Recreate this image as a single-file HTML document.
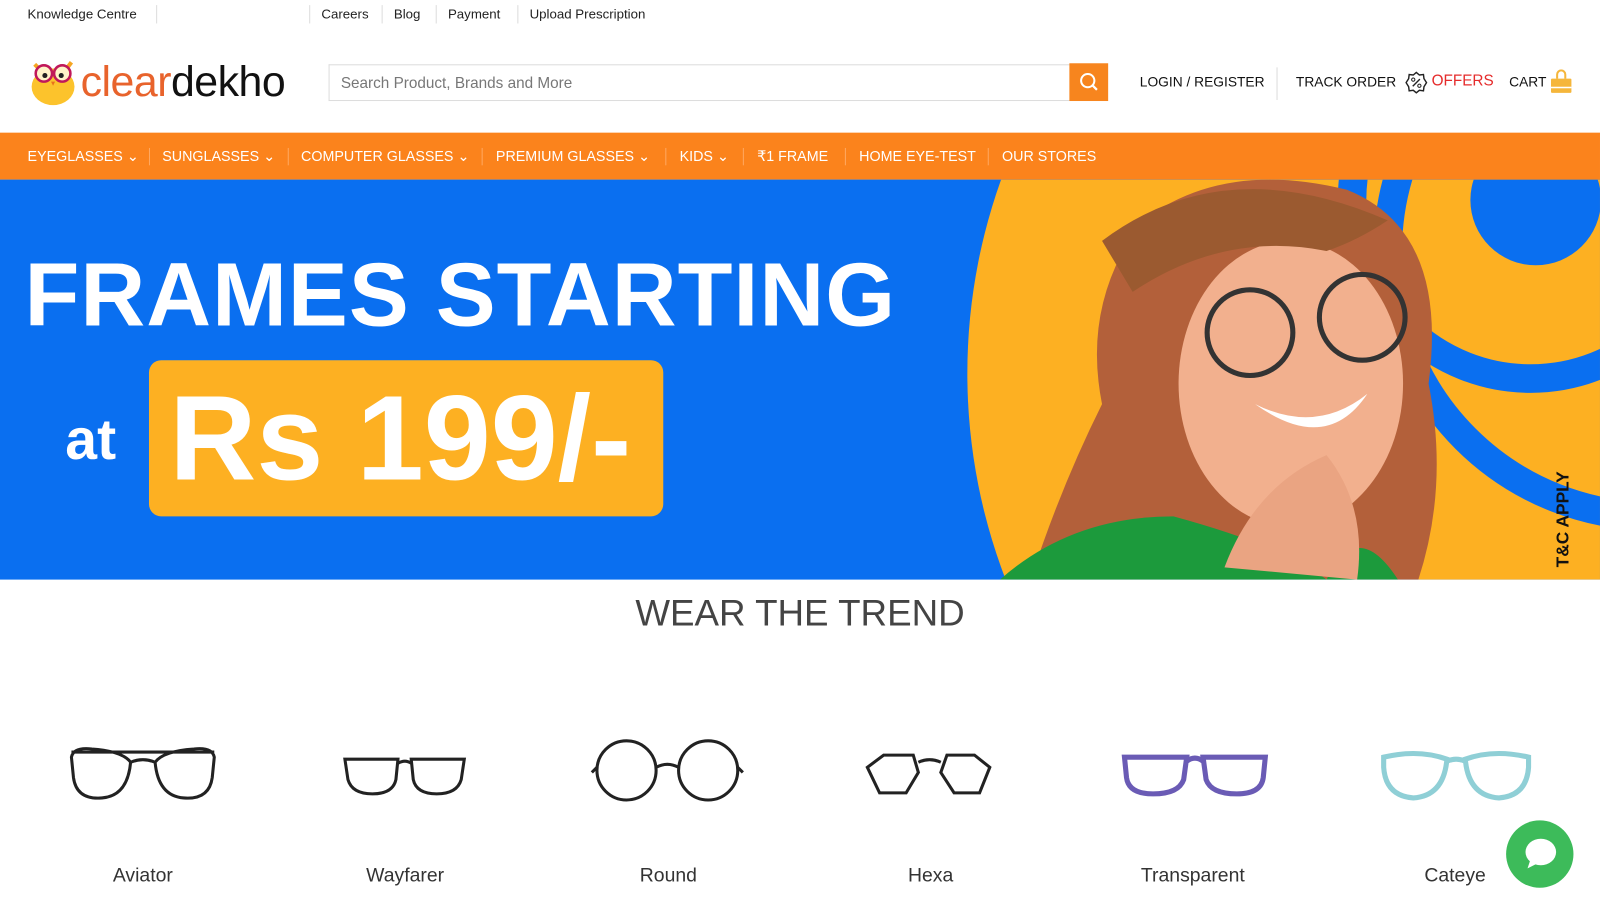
<!DOCTYPE html>
<html><head><meta charset="utf-8"><style>
*{margin:0;padding:0;box-sizing:border-box}
body{width:1600px;height:909px;overflow:hidden;background:#fff;font-family:"Liberation Sans",sans-serif;position:relative;color:#222}
#wrap{position:absolute;left:0;top:0;width:1568px;height:891px;transform:scale(1.0204);transform-origin:0 0}
.top{position:absolute;top:0;left:0;height:28px;font-size:13px;color:#222}
.top span{position:absolute;top:6px;white-space:nowrap}
.sep{position:absolute;width:1px;background:#ddd}
.nav{position:absolute;top:130px;left:0;width:1568px;height:46px;background:#fb831c}
.nav span{position:absolute;top:15px;color:#fff;font-size:14px;white-space:nowrap}
.nav i{position:absolute;top:15px;width:1px;height:17px;background:#ffa860}
.banner{position:absolute;top:176px;left:0;width:1568px;height:392px;background:#0a6ff0;overflow:hidden}
.lbl{position:absolute;top:848px;font-size:19px;color:#333;text-align:center;width:200px}
</style></head><body><div id="wrap">
<div class="top">
<span style="left:27px">Knowledge Centre</span>
<span style="left:315px">Careers</span><span style="left:386px">Blog</span><span style="left:439px">Payment</span><span style="left:519px">Upload Prescription</span>
</div>
<div class="sep" style="left:153px;top:5px;height:18px"></div>
<div class="sep" style="left:303px;top:5px;height:18px"></div>
<div class="sep" style="left:374px;top:5px;height:18px"></div>
<div class="sep" style="left:427px;top:5px;height:18px"></div>
<div class="sep" style="left:507px;top:5px;height:18px"></div>

<svg style="position:absolute;left:28px;top:55px" width="52" height="50" viewBox="0 0 52 50">
<ellipse cx="24" cy="30" rx="21" ry="18" fill="#fcc32c"/>
<path d="M6 8 L12 14 M42 6 L36 14" stroke="#f5a623" stroke-width="4"/>
<circle cx="15" cy="17" r="8" fill="#fff3c8" stroke="#c0185a" stroke-width="2.5"/>
<circle cx="33" cy="17" r="8" fill="#fff3c8" stroke="#c0185a" stroke-width="2.5"/>
<circle cx="16" cy="19" r="2.5" fill="#222"/><circle cx="32" cy="19" r="2.5" fill="#222"/>
<path d="M22 25 L24 29 L26 25Z" fill="#e8731c"/>
</svg>
<div style="position:absolute;left:79px;top:56px;font-size:42px;letter-spacing:-0.5px"><span style="color:#e8632c">clear</span><span style="color:#111">dekho</span></div>

<div style="position:absolute;left:322px;top:63px;width:728px;height:36px;border:1px solid #ddd;border-right:none;font-size:15px;color:#777;padding:9px 11px">Search Product, Brands and More</div>
<div style="position:absolute;left:1048px;top:62px;width:38px;height:37px;background:#f7851e">
<svg width="38" height="37"><circle cx="18" cy="17" r="6.5" fill="none" stroke="#fff" stroke-width="2"/><path d="M23 22 L27 26" stroke="#fff" stroke-width="2.2"/></svg></div>

<div style="position:absolute;left:1117px;top:73px;font-size:13.5px;color:#111">LOGIN / REGISTER</div>
<div class="sep" style="left:1251px;top:66px;height:32px"></div>
<div style="position:absolute;left:1270px;top:73px;font-size:13.5px;color:#111">TRACK ORDER</div>
<svg style="position:absolute;left:1377px;top:70px" width="22" height="22" viewBox="0 0 22 22"><path d="M11 1 L14 3.5 L18 3 L18.5 7 L21 11 L18.5 15 L18 19 L14 18.5 L11 21 L8 18.5 L4 19 L3.5 15 L1 11 L3.5 7 L4 3 L8 3.5Z" fill="none" stroke="#222" stroke-width="1.4"/><path d="M7.5 14.5 L14.5 7.5" stroke="#222" stroke-width="1.4"/><circle cx="8" cy="8" r="1.6" fill="none" stroke="#222"/><circle cx="14" cy="14" r="1.6" fill="none" stroke="#222"/></svg>
<div style="position:absolute;left:1403px;top:71px;font-size:15px;color:#e52b2b">OFFERS</div>
<div style="position:absolute;left:1479px;top:73px;font-size:13.5px;color:#111">CART</div>
<svg style="position:absolute;left:1518px;top:68px" width="24" height="24" viewBox="0 0 24 24"><path d="M8 9 V5 A4 4 0 0 1 16 5 V9" fill="none" stroke="#f5b63b" stroke-width="2"/><rect x="2" y="9" width="20" height="14" rx="1" fill="#f5b63b"/><rect x="2" y="17" width="20" height="1.5" fill="#fff"/></svg>

<div class="nav">
<span style="left:27px">EYEGLASSES ⌄</span><i style="left:146px"></i>
<span style="left:159px">SUNGLASSES ⌄</span><i style="left:282px"></i>
<span style="left:295px">COMPUTER GLASSES ⌄</span><i style="left:472px"></i>
<span style="left:486px">PREMIUM GLASSES ⌄</span><i style="left:652px"></i>
<span style="left:666px">KIDS ⌄</span><i style="left:728px"></i>
<span style="left:742px">₹1 FRAME</span><i style="left:828px"></i>
<span style="left:842px">HOME EYE-TEST</span><i style="left:968px"></i>
<span style="left:982px">OUR STORES</span>
</div>

<div class="banner">
<svg width="1568" height="392" style="position:absolute;left:0;top:0">
<circle cx="1510" cy="190" r="562" fill="#fdb022"/>
<circle cx="1500" cy="20" r="175" fill="none" stroke="#0a6ff0" stroke-width="28"/>
<circle cx="1505" cy="20" r="64" fill="#0a6ff0"/>
<circle cx="1620" cy="70" r="260" fill="none" stroke="#0a6ff0" stroke-width="28"/>
<path d="M1120 40 Q1200 -20 1320 10 Q1420 50 1400 200 Q1420 300 1390 392 L1010 392 Q1040 300 1080 220 Q1060 120 1120 40Z" fill="#b3603a"/>
<ellipse cx="1265" cy="200" rx="110" ry="140" fill="#f2b08e"/>
<path d="M1080 60 Q1200 -30 1360 40 Q1330 60 1300 70 Q1200 50 1110 110Z" fill="#9b5a30"/>
<circle cx="1225" cy="150" r="42" fill="none" stroke="#333" stroke-width="5"/>
<circle cx="1335" cy="135" r="42" fill="none" stroke="#333" stroke-width="5"/>
<path d="M1230 220 Q1290 250 1340 210 Q1300 270 1230 220Z" fill="#fff"/>
<path d="M980 392 Q1050 330 1150 330 Q1260 360 1300 392Z" fill="#1c9a3c"/>
<path d="M1300 392 Q1330 330 1370 392Z" fill="#1c9a3c"/>
<path d="M1200 380 Q1230 300 1300 270 Q1340 320 1330 392Z" fill="#eaa482"/>
</svg>
<div style="position:absolute;left:24px;top:62px;color:#fff;font-size:88px;font-weight:bold;letter-spacing:1px;white-space:nowrap">FRAMES STARTING</div>
<div style="position:absolute;left:64px;top:222px;color:#fff;font-size:56px;font-weight:bold">at</div>
<div style="position:absolute;left:146px;top:177px;width:504px;height:153px;background:#fdb022;border-radius:12px"></div>
<div style="position:absolute;left:166px;top:186px;color:#fff;font-size:118px;font-weight:bold;white-space:nowrap">Rs 199/-</div>
<div style="position:absolute;transform:rotate(-90deg);transform-origin:0 0;font-size:17px;font-weight:bold;color:#111;white-space:nowrap;left:1522px;top:380px">T&amp;C APPLY</div>
</div>

<div style="position:absolute;left:0;top:580px;width:1568px;text-align:center;font-size:36px;color:#444">WEAR THE TREND</div>

<svg style="position:absolute;left:0;top:702px" width="1568" height="110">
<g fill="none" stroke="#222" stroke-width="3">
<path d="M70 40 Q72 30 90 32 Q120 34 128 45 Q125 78 100 80 Q75 82 72 60Z M210 40 Q208 30 190 32 Q160 34 152 45 Q155 78 180 80 Q205 82 208 60Z M128 45 Q140 40 152 45 M70 35 L210 35"/>
<path d="M338 42 L390 42 L388 62 Q385 76 365 76 Q345 76 341 62Z M455 42 L403 42 L405 62 Q408 76 428 76 Q448 76 452 62Z M390 46 Q397 42 403 46"/>
<circle cx="614" cy="53" r="29"/><circle cx="694" cy="53" r="29"/><path d="M643 50 Q654 44 665 50 M585 50 L580 55 M723 50 L728 55"/>
<path d="M850 50 L866 38 L895 38 L900 55 L888 75 L862 75Z M970 50 L955 38 L928 38 L922 55 L935 75 L960 75Z M900 45 Q911 40 922 45"/>
</g>
<g fill="none" stroke="#6a5bb5" stroke-width="5"><path d="M1102 40 L1163 40 L1160 62 Q1155 76 1130 76 Q1106 76 1104 60Z M1240 40 L1179 40 L1182 62 Q1187 76 1212 76 Q1236 76 1238 60Z M1163 44 Q1171 38 1179 44"/></g>
<g fill="none" stroke="#8fcfd6" stroke-width="5"><path d="M1356 40 Q1390 32 1418 42 Q1415 78 1385 80 Q1358 78 1356 50Z M1498 40 Q1464 32 1436 42 Q1439 78 1469 80 Q1496 78 1498 50Z M1418 44 Q1427 40 1436 44"/></g>
</svg>
<div class="lbl" style="left:40px">Aviator</div>
<div class="lbl" style="left:297px">Wayfarer</div>
<div class="lbl" style="left:555px">Round</div>
<div class="lbl" style="left:812px">Hexa</div>
<div class="lbl" style="left:1069px">Transparent</div>
<div class="lbl" style="left:1326px">Cateye</div>

<div style="position:absolute;left:1476px;top:804px;width:66px;height:66px;border-radius:50%;background:#3dbb5a"></div>
<svg style="position:absolute;left:1476px;top:804px" width="66" height="66"><ellipse cx="34" cy="31" rx="15" ry="13" fill="#fff"/><path d="M24 38 L21 47 L31 42Z" fill="#fff"/></svg>
</div></body></html>
